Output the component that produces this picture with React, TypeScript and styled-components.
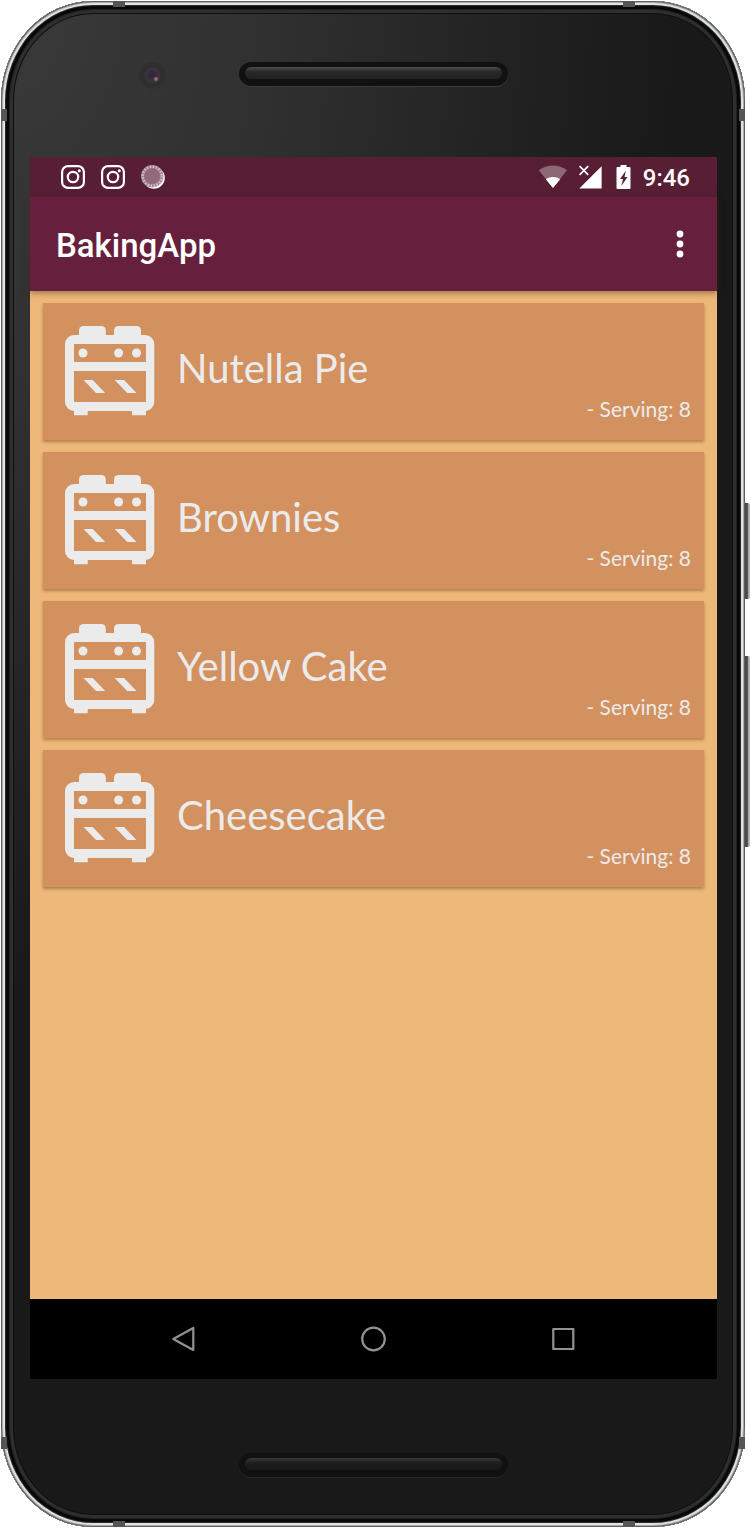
import React from "react";
import styled, { createGlobalStyle } from "styled-components";

const GlobalStyle = createGlobalStyle`
  *, *::before, *::after { box-sizing: border-box; }
  body { margin: 0; background: #fff; font-family: Roboto, "Liberation Sans", sans-serif; }
`;

const Stage = styled.div`
  display: flex;
  min-height: 100vh;
  padding: 1px 5px 1px 1px;
`;

const Phone = styled.div`
  position: relative;
  flex: 1;
  display: flex;
  flex-direction: column;
  padding: 0 28px 0 29px;
  border-radius: 92px / 100px;
  background: radial-gradient(ellipse 680px 1000px at 0 0, #3a3a3a, #303030 40%, #1e1e1e 85%, #191919);
  box-shadow:
    inset 0 0 0 1px #5c5f5d,
    inset 0 0 0 2px #a9aeaa,
    inset 0 0 0 4px #dfe3e0,
    inset 0 0 0 5px #2c2c2c,
    inset 0 0 0 8px #080808,
    inset 0 0 0 9px #202020,
    inset 0 0 0 12px #2e2e2e,
    inset 0 0 0 13px #0f0f0f;
`;

const SideKey = styled.span<{ $top: number; $height: number }>`
  position: absolute;
  left: 100%;
  top: ${(p) => p.$top}px;
  height: ${(p) => p.$height}px;
  width: 5px;
  border-radius: 0 2px 2px 0;
  background: linear-gradient(90deg, #444 0, #555 50%, #aaa 70%, #bbb);
`;

const Antenna = styled.span<{ $edge: "top" | "bottom" | "left" | "right"; $end?: boolean }>`
  position: absolute;
  background: #555;
  ${(p) => `${p.$edge}: 0;`}
  ${(p) =>
    p.$edge === "top" || p.$edge === "bottom"
      ? `width: 12px; height: 6px; ${p.$end ? "right: 110px" : "left: 112px"};`
      : `width: 6px; height: 12px; ${p.$end ? "bottom: 78px" : "top: 108px"};`}
`;

const Bezel = styled.div<{ $height: number; $top: number }>`
  position: relative;
  display: flex;
  justify-content: center;
  height: ${(p) => p.$height}px;
  padding-top: ${(p) => p.$top}px;
`;

const Speaker = styled.div<{ $dim?: boolean }>`
  width: 269px;
  height: 24px;
  padding: 5px 6px 7px;
  border-radius: 12px;
  background: #111;
  box-shadow: 0 1px 0 ${(p) => (p.$dim ? "#262626" : "#3c3c3c")};

  &::before {
    content: "";
    display: block;
    height: 12px;
    border-radius: 6px;
    background: ${(p) =>
      p.$dim
        ? "linear-gradient(#383838, #1e1e1e 40%, #181818)"
        : "linear-gradient(#4a4a4a, #282828 40%, #202020)"};
  }
`;

const Camera = styled.span`
  position: absolute;
  left: 109px;
  top: 61px;
  width: 27px;
  height: 27px;
  border-radius: 50%;
  background:
    radial-gradient(circle at 17px 17px, #c08080 0, #b0787800 3px),
    radial-gradient(circle, #2b2636 0, #39333f 7px, #2d2d2d 9px, #303030 12px, #2a2a2a);
`;

const Screen = styled.div`
  flex: 1;
  display: flex;
  flex-direction: column;
  background: #edb879;
`;

const StatusBar = styled.div`
  display: flex;
  align-items: center;
  height: 40px;
  padding: 0 27px 0 31px;
  background: #581e34;
  color: #fff;
`;

const Notifications = styled.div`
  display: flex;
  gap: 16px;
  margin-right: auto;
`;

const Signals = styled.div`
  display: flex;
  align-items: center;
  gap: 12px;
`;

const Clock = styled.time`
  padding-top: 2px;
  font-size: 24px;
  line-height: 24px;
  font-weight: 500;
`;

const AppBar = styled.header`
  position: relative;
  display: flex;
  align-items: center;
  justify-content: space-between;
  height: 94px;
  padding: 0 24px 0 26px;
  background: #661f3c;
  color: #fff;
  box-shadow: 0 2px 6px rgba(70, 40, 20, 0.5);
`;

const AppTitle = styled.h1`
  margin: 0;
  padding-top: 4px;
  font-size: 33px;
  line-height: 40px;
  font-weight: 500;
`;

const IconButton = styled.button`
  display: flex;
  align-items: center;
  justify-content: center;
  padding: 0;
  border: 0;
  background: none;
  color: inherit;
  cursor: pointer;
`;

const RecipeList = styled.ul`
  flex: 1;
  display: flex;
  flex-direction: column;
  gap: 12px;
  margin: 0;
  padding: 12px 13px;
  list-style: none;
`;

const RecipeCard = styled.li`
  display: flex;
  align-items: center;
  gap: 22px;
  height: 137px;
  padding: 0 13px 2px 22px;
  background: #d3915f;
  color: #ebebeb;
  font-family: "Coming Soon", Lato, sans-serif;
  box-shadow: 0 2px 3px rgba(100, 60, 20, 0.45);
`;

const RecipeName = styled.h2`
  flex: 1;
  margin: 0;
  padding-bottom: 6px;
  font-size: 40px;
  line-height: 48px;
  font-weight: 400;
`;

const Serving = styled.p`
  align-self: flex-end;
  margin: 0 0 17px;
  font-size: 21px;
  line-height: 24px;
`;

const NavBar = styled.nav`
  display: flex;
  justify-content: center;
  height: 80px;
  background: #000;
  color: #929292;

  ${IconButton} {
    flex: 0 1 190px;
  }
`;

const CameraLogo = () => (
  <svg width="24" height="24" viewBox="0 0 24 24" fill="none" stroke="currentColor" strokeWidth="2.2" aria-hidden="true">
    <rect x="1.1" y="1.1" width="21.8" height="21.8" rx="6" />
    <circle cx="12" cy="12" r="5.2" />
    <circle cx="18.3" cy="5.7" r="1.5" fill="currentColor" stroke="none" />
  </svg>
);

const SyncDial = () => (
  <svg width="24" height="24" viewBox="0 0 24 24" aria-hidden="true">
    <circle cx="12.8" cy="12.8" r="11" fill="#fff" />
    <circle cx="11.2" cy="11.2" r="11.2" fill="#a58392" />
    <circle cx="11.2" cy="11.2" r="9.5" fill="none" stroke="#d3c1c9" strokeWidth="2.6" strokeDasharray="1.4 1.6" />
    <circle cx="11.2" cy="11.2" r="8" fill="#94697b" />
  </svg>
);

const Wifi = () => (
  <svg width="29" height="24" viewBox="0 0 29 24" aria-hidden="true">
    <path d="M15 23 L0.800 5.300 C9 -1.200 21 -1.200 29 5.300 Z" fill="#fff" opacity="0.33" />
    <path d="M15 23 L7.800 14.200 C12 11.300 18 11.300 22.200 14.200 Z" fill="#fff" />
  </svg>
);

const CellSignal = () => (
  <svg width="24" height="24" viewBox="0 0 24 24" aria-hidden="true">
    <path d="M22.600 1.300 V23.500 H0.300 Z" fill="#fff" />
    <path d="M-1 -1 H10.500 V9 L8 12 H-1 Z" fill="#581e34" />
    <path d="M0.600 1.200 L9.200 9.800 M9.200 1.200 L0.600 9.800" stroke="#fff" strokeWidth="1.700" />
  </svg>
);

const Battery = () => (
  <svg width="16" height="24" viewBox="0 0 16 24" aria-hidden="true">
    <path d="M5.500 0 h6 v2 h3 a1 1 0 0 1 1 1 v20 a1 1 0 0 1 -1 1 H2.500 a1 1 0 0 1 -1 -1 V3 a1 1 0 0 1 1 -1 h3 Z" fill="#fff" />
    <path d="M11 5.500 L5 14 H8 L6.300 21 L12.500 12 H9.500 Z" fill="#581e34" />
  </svg>
);

const Overflow = () => (
  <svg width="26" height="32" viewBox="0 0 26 32" fill="currentColor" aria-hidden="true">
    <circle cx="13" cy="6" r="3.400" />
    <circle cx="13" cy="16" r="3.400" />
    <circle cx="13" cy="26" r="3.400" />
  </svg>
);

const Oven = () => (
  <svg width="90" height="90" viewBox="0 0 90 90" fill="currentColor" aria-hidden="true">
    <path d="M14 10 V4.500 a4.500 4.500 0 0 1 4.500 -4.500 H36.300 a4.500 4.500 0 0 1 4.500 4.500 V10 Z" />
    <path d="M49 10 V4.500 a4.500 4.500 0 0 1 4.500 -4.500 H71.500 a4.500 4.500 0 0 1 4.500 4.500 V10 Z" />
    <path
      fillRule="evenodd"
      d="M9 9 H80.300 a9 9 0 0 1 9 9 V76 a9 9 0 0 1 -9 9 H9 a9 9 0 0 1 -9 -9 V18 a9 9 0 0 1 9 -9 Z M9 18 V36 H81 V18 Z M9 45 V76 H81 V45 Z"
    />
    <circle cx="18" cy="27" r="4.500" />
    <circle cx="53.600" cy="27" r="4.500" />
    <circle cx="71.500" cy="27" r="4.500" />
    <path d="M18.500 54 H27.700 L40.200 67 H31 Z M49.700 54 H59 L71.500 67 H62.200 Z" />
    <path d="M9 84 H22.700 V89.300 H9 Z M67 84 H81 V89.300 H67 Z" />
  </svg>
);

const NavIcon = ({ children }: { children: React.ReactNode }) => (
  <svg width="28" height="28" viewBox="0 0 28 28" fill="none" stroke="currentColor" strokeWidth="2.200" strokeLinejoin="round" aria-hidden="true">
    {children}
  </svg>
);

const recipes = [
  { name: "Nutella Pie", servings: 8 },
  { name: "Brownies", servings: 8 },
  { name: "Yellow Cake", servings: 8 },
  { name: "Cheesecake", servings: 8 },
];

export default function App() {
  return (
    <Stage>
      <GlobalStyle />
      <Phone>
        <Antenna $edge="top" />
        <Antenna $edge="top" $end />
        <Antenna $edge="bottom" />
        <Antenna $edge="bottom" $end />
        <Antenna $edge="left" />
        <Antenna $edge="left" $end />
        <Antenna $edge="right" />
        <Antenna $edge="right" $end />
        <SideKey $top={502} $height={96} />
        <SideKey $top={655} $height={191} />
        <Bezel $height={156} $top={61}>
          <Camera />
          <Speaker />
        </Bezel>
        <Screen>
          <StatusBar>
            <Notifications>
              <CameraLogo />
              <CameraLogo />
              <SyncDial />
            </Notifications>
            <Signals>
              <Wifi />
              <CellSignal />
              <Battery />
              <Clock>9:46</Clock>
            </Signals>
          </StatusBar>
          <AppBar>
            <AppTitle>BakingApp</AppTitle>
            <IconButton type="button" aria-label="More options">
              <Overflow />
            </IconButton>
          </AppBar>
          <RecipeList>
            {recipes.map((recipe) => (
              <RecipeCard key={recipe.name}>
                <Oven />
                <RecipeName>{recipe.name}</RecipeName>
                <Serving>- Serving: {recipe.servings}</Serving>
              </RecipeCard>
            ))}
          </RecipeList>
          <NavBar aria-label="System">
            <IconButton type="button" aria-label="Back">
              <NavIcon>
                <path d="M23.300 3 V25 L3.300 14 Z" />
              </NavIcon>
            </IconButton>
            <IconButton type="button" aria-label="Home">
              <NavIcon>
                <circle cx="13.500" cy="14" r="11.300" />
              </NavIcon>
            </IconButton>
            <IconButton type="button" aria-label="Recent apps">
              <NavIcon>
                <rect x="3.300" y="4" width="20" height="20" />
              </NavIcon>
            </IconButton>
          </NavBar>
        </Screen>
        <Bezel $height={148} $top={74}>
          <Speaker $dim />
        </Bezel>
      </Phone>
    </Stage>
  );
}
